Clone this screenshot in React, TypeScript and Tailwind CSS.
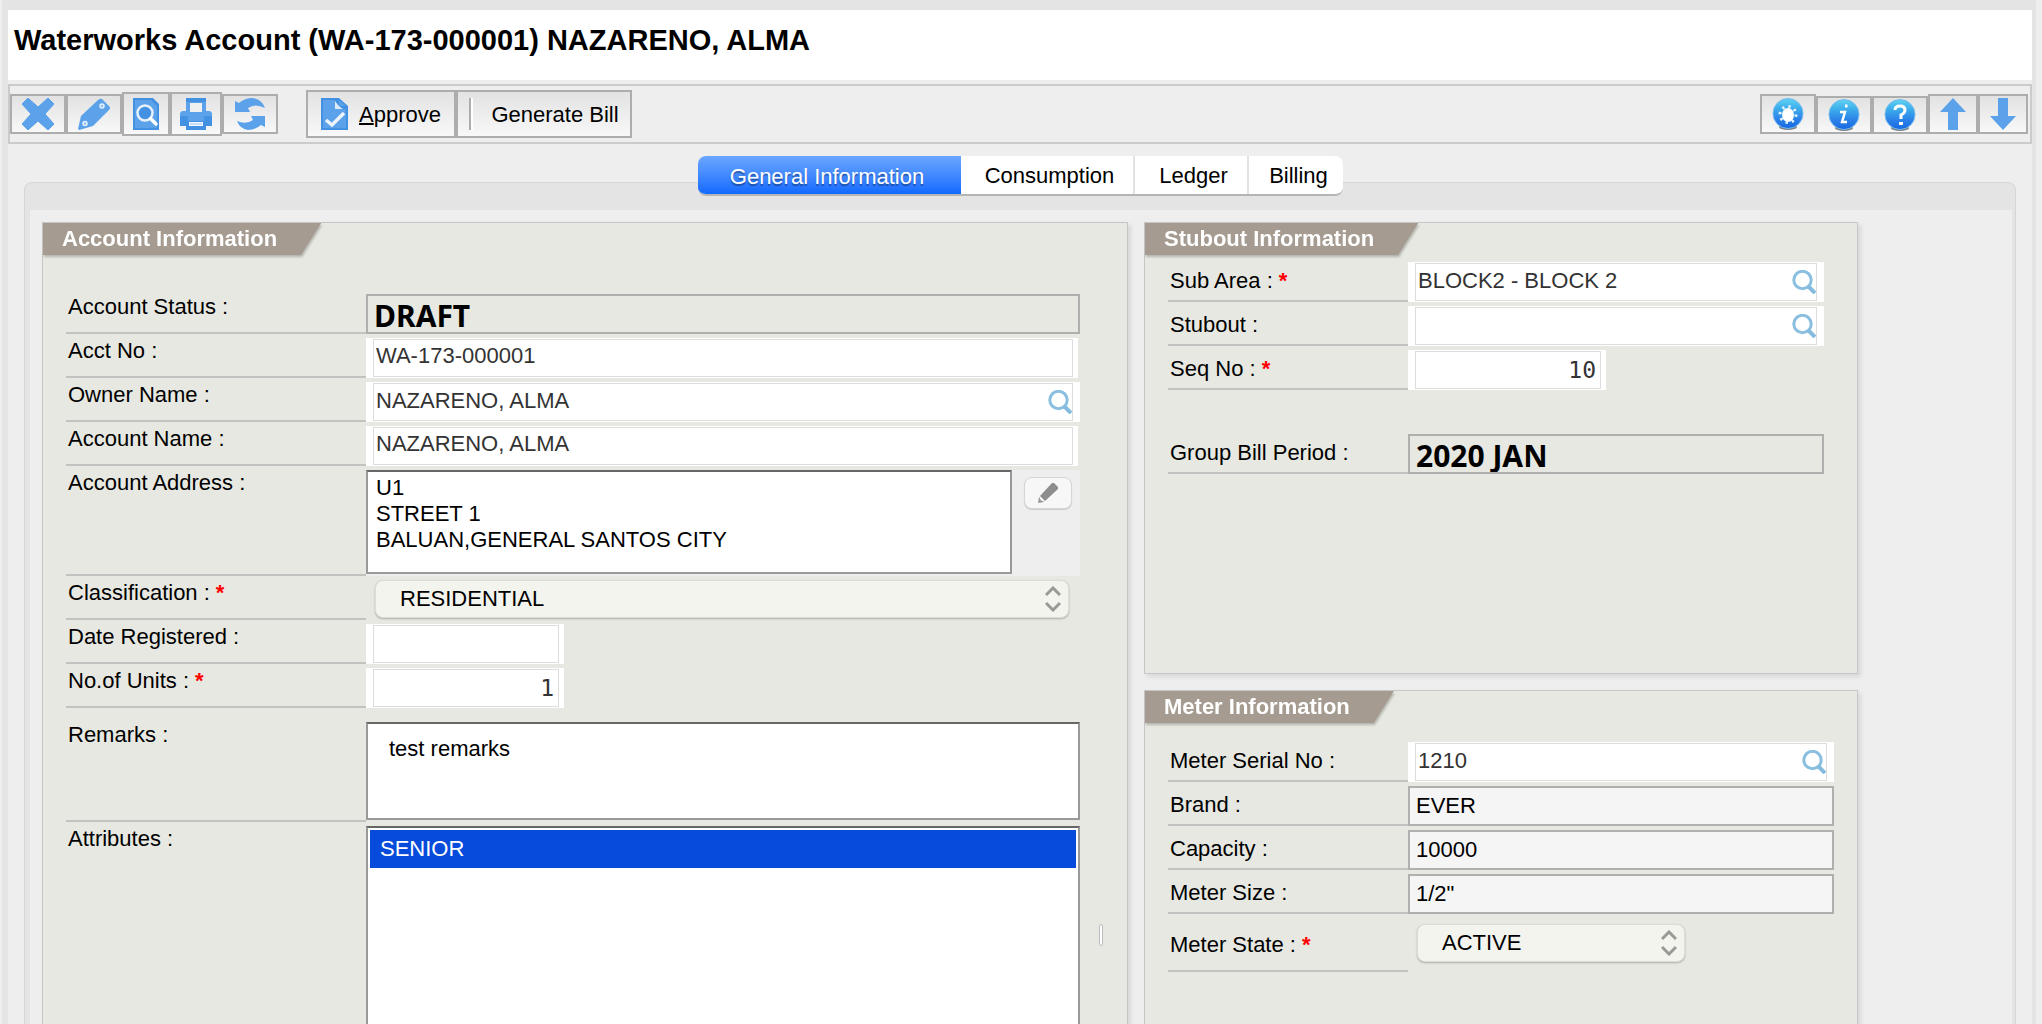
import type { ReactNode } from "react";

const BLUE = "#5ba2ea";
const DARK = "#4391e3";

function CloseIcon() {
  return (
    <svg width="32" height="32" viewBox="0 0 32 32" aria-hidden="true">
      <path d="M6 0 L16 9 L26 0 L32 6 L23 16 L32 26 L26 32 L16 23 L6 32 L0 26 L9 16 L0 6 Z" fill={BLUE} stroke={BLUE} strokeLinejoin="round" />
    </svg>
  );
}

function EditIcon() {
  return (
    <svg width="32" height="32" viewBox="0 0 32 32" aria-hidden="true">
      <path d="M20 2 Q22 0 24 1 L31 8 Q33 10 31 12 L15 28 L1 32 L0 31 L3 18 Z" fill={BLUE} />
      <circle cx="24" cy="8" r="2" fill="#8cbdf0" stroke="#e8f1fb" strokeWidth="1.5" />
      <circle cx="7" cy="25.5" r="2" fill="#8cbdf0" stroke="#e8f1fb" strokeWidth="1.5" />
    </svg>
  );
}

function PreviewIcon() {
  return (
    <svg width="26" height="32" viewBox="0 0 26 32" aria-hidden="true">
      <path d="M0 0 H20 L26 6 V32 H0 Z" fill={DARK} />
      <path d="M2 2 H18 L24 8 V30 H2 Z" fill={BLUE} />
      <circle cx="12" cy="15" r="7.5" fill={DARK} stroke="#e8f1fb" strokeWidth="2.5" />
      <path d="M17.5 20.5 L23 26" stroke="#ffffff" strokeWidth="3.5" strokeLinecap="round" />
    </svg>
  );
}

function PrinterIcon() {
  return (
    <svg width="32" height="32" viewBox="0 0 32 32" aria-hidden="true">
      <path d="M6 0 H26 V13 H30 L32 15 V26 L30 28 H26 V32 H6 V28 H2 L0 26 V15 L2 13 H6 Z" fill={BLUE} />
      <path d="M6 0 H26 V4 H6 Z M0 18 H8 V23 H24 V18 H32 V28 H26 V32 H6 V28 H0 Z" fill={DARK} />
      <path d="M10 5 H22 V14 H10 Z" fill="#f0f0f0" />
      <path d="M9 24 H23 V28 H9 Z" fill="#f4f8fd" />
      <path d="M10 25.5 H22 V26.5 H10 Z" fill="#9cc6f2" />
    </svg>
  );
}

function RefreshIcon() {
  return (
    <svg width="30" height="32" viewBox="0 0 30 32" aria-hidden="true">
      <path d="M0 3 L4 5 Q10 0 17 0 Q27 1 30 10 Q20 5 13 10 L15 14 H0 Z" fill={BLUE} />
      <path d="M30 29 L26 27 Q20 32 13 32 Q5 31 2 23 Q11 27 18 22 L16 18 H30 Z" fill={BLUE} />
    </svg>
  );
}

function ApproveIcon() {
  return (
    <svg width="28" height="32" viewBox="0 0 28 32" aria-hidden="true">
      <path d="M0 0 H18 L27 8 V32 H0 Z" fill={DARK} />
      <path d="M2 2 H14 V11 H25 V30 H2 Z" fill={BLUE} />
      <path d="M14 3 V11 H22 L19 9 L17 7 Z" fill="#dfeaf6" />
      <path d="M18 2 L25 8 H18 Z" fill="#5ba2ea" />
      <path d="M5 22 L11 27 L23 15" stroke="#eef4fb" strokeWidth="3.5" fill="none" />
    </svg>
  );
}

function Ball({ id, children }: { id: string; children: ReactNode }) {
  return (
    <svg width="32" height="32" viewBox="0 0 32 32" aria-hidden="true">
      <defs>
        <linearGradient id={id} x1="0" y1="0" x2="0" y2="1">
          <stop offset="0" stopColor="#62d3f2" />
          <stop offset="0.3" stopColor="#3fb0ec" />
          <stop offset="0.7" stopColor="#2a80e8" />
          <stop offset="1" stopColor="#1668e0" />
        </linearGradient>
      </defs>
      <ellipse cx="16" cy="29" rx="9" ry="3" fill="#7c7f86" />
      <circle cx="16" cy="15.5" r="15" fill={`url(#${id})`} stroke="#72b9ee" />
      {children}
    </svg>
  );
}

function GearIcon() {
  return (
    <Ball id="ball-gear">
      <ellipse cx="16" cy="17" rx="6" ry="7" fill="#ffffff" />
      <circle cx="16" cy="16.5" r="8" fill="none" stroke="#e6f5fd" strokeWidth="3" strokeDasharray="2.3 4" />
    </Ball>
  );
}

function InfoIcon() {
  return (
    <Ball id="ball-info">
      <path d="M17 7 H19.5" stroke="#ffffff" strokeWidth="3" />
      <path d="M12 13 H17 L14 23 H19" stroke="#ffffff" strokeWidth="2.5" fill="none" />
    </Ball>
  );
}

function HelpIcon() {
  return (
    <Ball id="ball-help">
      <path d="M11 11 Q11 7 16 7 Q21 7 21 11 Q21 14 17 16 V20" stroke="#ffffff" strokeWidth="3" fill="none" />
      <path d="M15 23 H19 V26 H15 Z" fill="#ffffff" />
    </Ball>
  );
}

function ArrowIcon({ down = false }: { down?: boolean }) {
  return (
    <svg width="26" height="32" viewBox="0 0 26 32" aria-hidden="true">
      <path d={down ? "M13 32 L26 18 H18 V0 H8 V18 H0 Z" : "M13 0 L26 14 H18 V32 H8 V14 H0 Z"} fill={BLUE} />
    </svg>
  );
}

function SearchIcon() {
  return (
    <svg width="24" height="24" viewBox="0 0 24 24" aria-hidden="true">
      <circle cx="10.5" cy="10" r="8.7" fill="none" stroke="#8abfe0" strokeWidth="3" />
      <path d="M16.5 16.5 L23 23" stroke="#84bbde" strokeWidth="4" />
    </svg>
  );
}

function Chevrons() {
  return (
    <svg width="16" height="26" viewBox="0 0 16 26" fill="none" stroke="#999a95" strokeWidth="3" aria-hidden="true">
      <path d="M1 9 L8 2 L15 9 M1 17 L8 24 L15 17" />
    </svg>
  );
}

const toolBtn = "flex items-center justify-center border-2 border-[#adadad] bg-linear-to-b from-[#e2e2e2] to-[#f8f8f8]";

function Tool({ label, size, children }: { label: string; size: string; children: ReactNode }) {
  return (
    <button type="button" aria-label={label} className={`${toolBtn} ${size}`}>
      {children}
    </button>
  );
}

function Panel({ title, className, children }: { title: string; className: string; children: ReactNode }) {
  return (
    <section className={`flex min-w-0 flex-col border border-[#c6c6c6] bg-[#e7e8e1] shadow-[3px_3px_4px_rgba(0,0,0,0.09)] ${className}`}>
      <header className="self-start drop-shadow-[1px_2px_1px_rgba(0,0,0,0.22)]">
        <h2 className="bg-[#a59b90] pr-11 pl-[19px] leading-8 font-bold text-white [clip-path:polygon(0_0,100%_0,calc(100%-20px)_100%,0_100%)]">
          {title}
        </h2>
      </header>
      {children}
    </section>
  );
}

type RowProps = {
  id: string;
  label: string;
  required?: boolean;
  labelClass?: string;
  className?: string;
  children: ReactNode;
};

function Row({ id, label, required, labelClass = "w-[300px]", className = "h-10", children }: RowProps) {
  return (
    <div className={`flex ${className}`}>
      <label htmlFor={id} className={`shrink-0 border-b-2 border-[#c2c2c0] pl-0.5 leading-[26px] ${labelClass}`}>
        {label} :{required && <span className="pl-1.5 font-bold text-[#f00]">*</span>}
      </label>
      <div className="flex min-w-0 flex-1 items-start">{children}</div>
    </div>
  );
}

function TextField({ id, value, wide = true }: { id: string; value: string; wide?: boolean }) {
  return (
    <div className={`h-10 bg-white py-px pr-[5px] pl-[7px] ${wide ? "mr-0.5 flex-1" : "w-[198px]"}`}>
      <input
        id={id}
        defaultValue={value}
        className={`block h-[38px] w-full border border-[#dcdcdc] bg-white px-0.5 text-[#333] outline-none ${
          wide ? "pb-1" : "pr-1 text-right font-['DejaVu_Sans_Mono',monospace] text-[23px]"
        }`}
      />
    </div>
  );
}

function LookupField({ id, value }: { id: string; value: string }) {
  return (
    <div className="h-10 min-w-0 flex-1 bg-white px-[7px] py-px">
      <div className="flex h-[38px] items-center border border-[#dcdcdc]">
        <input id={id} defaultValue={value} className="h-full min-w-0 flex-1 bg-white px-0.5 pb-[3px] text-[#333] outline-none" />
        <button type="button" aria-label="Look up">
          <SearchIcon />
        </button>
      </div>
    </div>
  );
}

function ReadOnly({ id, value, big = false }: { id: string; value: string; big?: boolean }) {
  return (
    <input
      id={id}
      readOnly
      defaultValue={value}
      className={`h-10 min-w-0 flex-1 border-2 border-[#b0b0ae] px-1.5 text-black outline-none ${
        big ? "bg-[#e7e8e1] pt-0.5 font-['Noto_Sans',sans-serif] text-[30px] font-bold" : "bg-[#f5f5f5]"
      }`}
    />
  );
}

function Select({ id, value, className }: { id: string; value: string; className: string }) {
  return (
    <div className={`relative ml-[9px] ${className}`}>
      <select
        id={id}
        defaultValue={value}
        className="block h-[38px] w-full appearance-none rounded-lg border border-[#dcddd6] bg-[#f3f4ee] pb-0.5 pl-6 text-black shadow-[0_1px_2px_rgba(0,0,0,0.25)] outline-none"
      >
        <option>{value}</option>
      </select>
      <span className="pointer-events-none absolute top-1.5 right-2">
        <Chevrons />
      </span>
    </div>
  );
}

const areaBorder = "border-2 border-[#999] border-t-[#666] bg-white text-black";

const tabs = [
  { name: "Consumption", size: "w-[174px]" },
  { name: "Ledger", size: "w-[114px]" },
  { name: "Billing", size: "w-[94px]" },
];

export default function App() {
  const right = "w-60 pt-1.5";
  return (
    <div className="h-screen overflow-hidden bg-[#eee] pr-1.5 pl-0.5 font-['Liberation_Sans',Arial,sans-serif] text-[22px] text-black">
      <div className="flex h-full flex-col border-t-10 border-r-4 border-l-6 border-[#e4e4e4]">
        <h1 className="mb-1 h-[70px] shrink-0 bg-white pt-3.5 pl-1.5 text-[29px] leading-8 font-bold">
          Waterworks Account (WA-173-000001) NAZARENO, ALMA
        </h1>

        <div className="flex h-15 shrink-0 items-center justify-between border-2 border-[#cbcbcb] pr-0.5">
          <div className="flex items-center">
            <Tool label="Close" size="h-10 w-14"><CloseIcon /></Tool>
            <Tool label="Edit" size="h-10 w-14"><EditIcon /></Tool>
            <Tool label="Preview" size="h-11 w-12"><PreviewIcon /></Tool>
            <Tool label="Print" size="h-11 w-[52px]"><PrinterIcon /></Tool>
            <Tool label="Refresh" size="h-10 w-14"><RefreshIcon /></Tool>
            <button type="button" className={`${toolBtn} ml-7 h-12 w-[150px] gap-2.5`}>
              <ApproveIcon />
              <span><span className="underline decoration-2">A</span>pprove</span>
            </button>
            <button type="button" className={`${toolBtn} h-12 w-[176px]`}>
              <span className="mr-[18px] h-8 w-1 border-r-2 border-l-2 border-r-white border-l-[#adadad]" />
              Generate Bill
            </button>
          </div>
          <div className="flex items-end">
            <Tool label="Settings" size="h-10 w-14"><GearIcon /></Tool>
            <Tool label="Info" size="h-[38px] w-14"><InfoIcon /></Tool>
            <Tool label="Help" size="h-[38px] w-14"><HelpIcon /></Tool>
            <Tool label="Previous" size="h-10 w-[50px]"><ArrowIcon /></Tool>
            <Tool label="Next" size="h-10 w-[50px]"><ArrowIcon down /></Tool>
          </div>
        </div>

        <nav role="tablist" className="relative z-10 mt-3 -mb-3.5 flex h-10 shrink-0 self-center overflow-hidden rounded-lg border-b-2 border-[#b5b5b5] bg-white">
          <button type="button" role="tab" aria-selected="true" className="-mb-0.5 w-[263px] bg-linear-to-b from-[#6ba6ff] to-[#0565ff] pr-1 text-white [text-shadow:0_2px_1px_rgba(0,0,0,0.35)]">
            General Information
          </button>
          {tabs.map((tab) => (
            <button key={tab.name} type="button" role="tab" aria-selected="false" className={`border-r-2 border-[#e2e2e2] pl-1.5 last:border-r-0 ${tab.size}`}>
              {tab.name}
            </button>
          ))}
        </nav>

        <main className="mr-4 ml-4 flex min-h-0 flex-1 flex-col rounded-t-lg border border-b-0 border-[#d6d6d6] bg-[#e4e4e4] pt-[27px] pr-[3px] pl-[5px]">
          <div className="grid min-h-0 flex-1 grid-cols-[1086fr_714fr_138fr] gap-4 bg-[#eee] pt-3 pl-3">
            <Panel title="Account Information" className="border-b-0">
              <form className="relative mt-[39px] mr-[47px] ml-[23px] flex flex-1 flex-col gap-1">
                <Row id="status" label="Account Status"><ReadOnly id="status" value="DRAFT" big /></Row>
                <Row id="acctno" label="Acct No"><TextField id="acctno" value="WA-173-000001" /></Row>
                <Row id="owner" label="Owner Name"><LookupField id="owner" value="NAZARENO, ALMA" /></Row>
                <Row id="acctname" label="Account Name"><TextField id="acctname" value="NAZARENO, ALMA" /></Row>
                <Row id="address" label="Account Address" className="h-[106px]">
                  <div className="flex h-full flex-1 bg-[#eee]">
                    <textarea
                      id="address"
                      defaultValue={"U1\nSTREET 1\nBALUAN,GENERAL SANTOS CITY"}
                      className={`h-[104px] flex-1 resize-none pt-[3px] pl-2 leading-[26px] outline-none ${areaBorder}`}
                    />
                    <button type="button" aria-label="Edit address" className="mt-[7px] mr-2 ml-3 flex h-8 w-12 items-center justify-center rounded-lg border border-[#d6d6d6] bg-[#f7f7f7] shadow-[0_1px_1px_rgba(0,0,0,0.15)]">
                      <svg width="20" height="20" viewBox="0 0 20 20" aria-hidden="true">
                        <path d="M14 0 H16 L20 4 V6 L7 18 L2 13 Z" fill="#8d8d8d" />
                        <path d="M1 14 L6 19 L0 20 Z" fill="#999" />
                        <path d="M2 14 L6 18 L4 18 L2 16 Z" fill="#fff" />
                      </svg>
                    </button>
                  </div>
                </Row>
                <Row id="class" label="Classification" required><Select id="class" value="RESIDENTIAL" className="mr-[11px] flex-1" /></Row>
                <Row id="date" label="Date Registered"><TextField id="date" value="" wide={false} /></Row>
                <Row id="units" label="No.of Units" required><TextField id="units" value="1" wide={false} /></Row>
                <Row id="remarks" label="Remarks" className="mt-2.5 h-25">
                  <textarea id="remarks" defaultValue="test remarks" className={`h-[98px] flex-1 resize-none px-[21px] pt-3 leading-[26px] outline-none ${areaBorder}`} />
                </Row>
                <div className="flex min-h-60 flex-1">
                  <span id="attributes" className="w-[300px] shrink-0 pl-0.5 leading-[26px]">Attributes :</span>
                  <ul role="listbox" aria-labelledby="attributes" className={`flex-1 border-b-0 p-0.5 ${areaBorder}`}>
                    <li role="option" aria-selected="true" className="h-[38px] bg-[#064bdb] pl-2.5 leading-[38px] text-white">SENIOR</li>
                  </ul>
                </div>
                <span className="absolute top-[630px] -right-[23px] h-[22px] w-1 rounded-sm border border-[#bbb] bg-white" />
              </form>
            </Panel>

            <div className="flex min-w-0 flex-col gap-4">
              <Panel title="Stubout Information" className="min-h-[452px]">
                <form className="mt-[7px] mr-[33px] ml-[23px] flex flex-col gap-1">
                  <Row id="area" label="Sub Area" required labelClass={right}><LookupField id="area" value="BLOCK2 - BLOCK 2" /></Row>
                  <Row id="stubout" label="Stubout" labelClass={right}><LookupField id="stubout" value="" /></Row>
                  <Row id="seq" label="Seq No" required labelClass={right}><TextField id="seq" value="10" wide={false} /></Row>
                  <Row id="period" label="Group Bill Period" labelClass={right} className="mt-10 h-10"><ReadOnly id="period" value="2020 JAN" big /></Row>
                </form>
              </Panel>

              <Panel title="Meter Information" className="flex-1 border-b-0">
                <form className="mt-[19px] mr-[23px] ml-[23px] flex flex-col gap-1">
                  <Row id="serial" label="Meter Serial No" labelClass={right}><LookupField id="serial" value="1210" /></Row>
                  <Row id="brand" label="Brand" labelClass={right}><ReadOnly id="brand" value="EVER" /></Row>
                  <Row id="capacity" label="Capacity" labelClass={right}><ReadOnly id="capacity" value="10000" /></Row>
                  <Row id="size" label="Meter Size" labelClass={right}><ReadOnly id="size" value={'1/2"'} /></Row>
                  <Row id="state" label="Meter State" required labelClass="w-60 pt-3.5" className="h-[54px]">
                    <div className="pt-1.5"><Select id="state" value="ACTIVE" className="w-[268px]" /></div>
                  </Row>
                </form>
              </Panel>
            </div>
          </div>
        </main>
      </div>
    </div>
  );
}
